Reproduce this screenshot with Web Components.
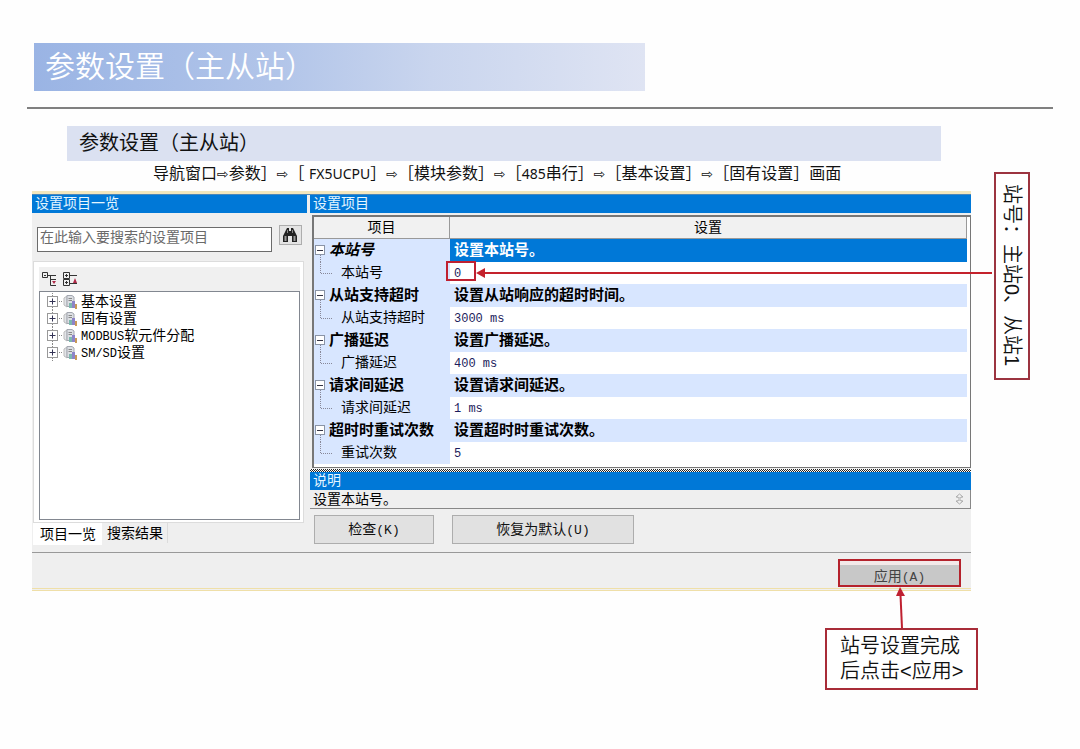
<!DOCTYPE html>
<html lang="zh-CN">
<head>
<meta charset="utf-8">
<title>参数设置（主从站）</title>
<style>
  body {
    margin: 0;
    background: #fefefe;
    color: #111;
    font-family: "Liberation Sans", "Noto Sans CJK SC", sans-serif;
  }
</style>
</head>
<body>
<slide-page>
  <slide-title slot="title">参数设置（主从站）</slide-title>
  <slide-subtitle slot="title">参数设置（主从站）</slide-subtitle>
  <nav-path slot="title"></nav-path>
  <settings-window></settings-window>
  <side-note slot="notes">站号：主站0、从站1</side-note>
  <apply-note slot="notes">站号设置完成<br>后点击&lt;应用&gt;</apply-note>
</slide-page>

<script>
class SlidePage extends HTMLElement {
  constructor() {
    super();
    this.attachShadow({ mode: 'open' });
    this.shadowRoot.innerHTML = `
      <style>
        :host {
          display: block;
          box-sizing: border-box;
          min-height: 100vh;
          padding-top: 43px;
          overflow: hidden;
          position: relative;
        }
        .stage {
          position: relative;
          padding: 0 109px 0 32px;
        }
      </style>
      <slot name="title"></slot>
      <div class="stage">
        <slot></slot>
        <slot name="notes"></slot>
      </div>
    `;
  }
}
customElements.define('slide-page', SlidePage);

class SlideTitle extends HTMLElement {
  constructor() {
    super();
    this.attachShadow({ mode: 'open' });
    this.shadowRoot.innerHTML = `
      <style>
        :host {
          display: block;
          margin: 0 27px;
          padding: 0 0 16px 7px;
          border-bottom: 2px solid #808080;
        }
        h1 {
          margin: 0;
          box-sizing: border-box;
          width: 60%;
          padding-left: 11px;
          color: #fff;
          font-size: 30px;
          font-weight: 350;
          line-height: 48px;
          background: linear-gradient(90deg, #9ab4e4, #b2c5e9 40%, #c9d5ee 65%, #dfe4f3);
        }
      </style>
      <h1><slot></slot></h1>
    `;
  }
}
customElements.define('slide-title', SlideTitle);

class SlideSubtitle extends HTMLElement {
  constructor() {
    super();
    this.attachShadow({ mode: 'open' });
    this.shadowRoot.innerHTML = `
      <style>
        :host {
          display: block;
          margin: 17px 139px 0 67px;
          background: #dbe1f1;
        }
        h2 {
          margin: 0;
          padding-left: 12px;
          font-size: 20px;
          font-weight: 400;
          line-height: 35px;
        }
      </style>
      <h2><slot></slot></h2>
    `;
  }
}
customElements.define('slide-subtitle', SlideSubtitle);

class NavPath extends HTMLElement {
  constructor() {
    super();
    this.attachShadow({ mode: 'open' });
    this.shadowRoot.innerHTML = `
      <style>
        :host {
          display: block;
          padding-left: 153px;
          font-size: 16px;
          line-height: 26px;
          height: 30px;
          white-space: nowrap;
        }
        i {
          font: 14px "DejaVu Sans", sans-serif;
        }
        b {
          font: 14px "Noto Sans", sans-serif;
        }
      </style>
      导航窗口<i>⇨</i>参数］<i>⇨</i>［ <b>FX5UCPU</b>］<i>⇨</i>［模块参数］<i>⇨</i>［<b>485</b>串行］<i>⇨</i>［基本设置］<i>⇨</i>［固有设置］画面
    `;
  }
}
customElements.define('nav-path', NavPath);

class TitleBar extends HTMLElement {
  constructor() {
    super();
    this.attachShadow({ mode: 'open' });
    this.shadowRoot.innerHTML = `
      <style>
        :host {
          display: block;
          height: 18px;
          padding-left: 3px;
          background: #0078d7;
          color: #e4f6ff;
          font-size: 14px;
          line-height: 16px;
        }
      </style>
      <slot></slot>
    `;
  }
}
customElements.define('title-bar', TitleBar);

class TreeItem extends HTMLElement {
  constructor() {
    super();
    this.attachShadow({ mode: 'open' });
    this.shadowRoot.innerHTML = `
      <style>
        :host {
          display: flex;
          align-items: center;
          gap: 3px;
          height: 17px;
          font-size: 14px;
          line-height: 17px;
          color: #000;
          white-space: nowrap;
        }
      </style>
      <svg width="32" height="17" viewBox="0 0 32 17" fill="none">
        <path d="M6.500 0V3M6.500 14V17M13 8.500H17" stroke="#888" stroke-dasharray="1 1"/>
        <rect x="1.500" y="3.500" width="10" height="10" fill="#fff" stroke="#999"/>
        <path d="M3.500 8.500H9.500M6.500 5.500V11.500" stroke="#335"/>
        <path d="M18 5L21 3V14L18 12Z" fill="#e2e4e8" stroke="#bbb"/>
        <path d="M21 2.500H26L28 4V13.500H21Z" fill="#dcdfe4" stroke="#a3a7b0"/>
        <path d="M22.500 5.500H26M22.500 7.500H26" stroke="#888"/>
        <path d="M23 10H26V15H23Z" fill="#7db8ae"/>
        <path d="M26 8H29V15H26Z" fill="#8d84c8"/>
        <path d="M29 11H31V16H29Z" fill="#c99a58"/>
      </svg>
      <span><slot></slot></span>
    `;
  }
}
customElements.define('tree-item', TreeItem);

class ItemPanel extends HTMLElement {
  constructor() {
    super();
    this.attachShadow({ mode: 'open' });
    this.shadowRoot.innerHTML = `
      <style>
        :host {
          display: flex;
          flex-direction: column;
          width: 275px;
          color: #000;
          font-size: 14px;
        }
        .search {
          display: flex;
          gap: 7px;
          padding: 12px 5px 0;
        }
        input {
          box-sizing: border-box;
          flex: 1;
          min-width: 0;
          height: 25px;
          margin: 2px 0 0;
          padding: 0 2px 5px;
          border: 1px solid #6b6b6b;
          border-radius: 0;
          background: #fff;
          font: 14px "Liberation Sans", "Noto Sans CJK SC", sans-serif;
        }
        input::placeholder {
          color: #6a6a6a;
          opacity: 1;
        }
        .find {
          display: grid;
          place-items: center;
          width: 23px;
          height: 20px;
          padding: 0;
          border: 1px solid #adadad;
          background: #e4e4e4;
        }
        .box {
          flex: 1;
          display: flex;
          flex-direction: column;
          margin: 9px 3px 0 1px;
          padding: 5px 3px 2px 5px;
          border: 1px solid #dcdcdc;
          background: #fff;
        }
        .tools {
          display: flex;
          align-items: center;
          gap: 4px;
          height: 24px;
          padding-left: 3px;
          background: #f0f0f0;
        }
        .tools button {
          display: flex;
          padding: 0;
          border: 0;
          background: none;
        }
        .tree {
          flex: 1;
          padding: 1px 6px;
          border: 1px solid #828790;
        }
        .latin {
          font: 12px "Liberation Mono", monospace;
        }
        .tabs {
          display: flex;
          align-items: flex-start;
          height: 29px;
          padding-left: 1px;
        }
        .tabs button {
          box-sizing: border-box;
          padding: 0 6px 0 7px;
          border: 0;
          background: #fff;
          color: #000;
          font: 14px/22px "Liberation Sans", "Noto Sans CJK SC", sans-serif;
        }
        .tabs button + button {
          height: 20px;
          padding: 0 4px 0 5px;
          border-right: 1px solid #dcdcdc;
          background: none;
          line-height: 18px;
        }
      </style>
      <title-bar>设置项目一览</title-bar>
      <div class="search">
        <input type="text" placeholder="在此输入要搜索的设置项目" aria-label="在此输入要搜索的设置项目">
        <button class="find" aria-label="搜索">
          <svg width="17" height="16" viewBox="0 0 17 16">
            <path d="M4 3L5 1H7V4H9V1H11L12 3L15 9V15H10V9H6V15H1V9Z" fill="#222"/>
            <path d="M3.500 9V14M12.500 9V14" stroke="#999" stroke-width="2"/>
            <path d="M5.500 3V6M10.500 3V6" stroke="#888"/>
          </svg>
        </button>
      </div>
      <div class="box">
        <div class="tools">
          <button aria-label="折叠">
            <svg width="16" height="16" viewBox="0 0 16 16" fill="none">
              <path d="M.5 1.500H5.500V6.500H.5ZM2 4.500H4M6 4.500H14M8.500 5V14.500H14M9 8.500H14" stroke="#333"/>
              <path d="M10 10H14L12 13Z" fill="#b02a48"/>
            </svg>
          </button>
          <button aria-label="展开">
            <svg width="16" height="16" viewBox="0 0 16 16" fill="none">
              <path d="M1.500 1.500H7.500V7.500H1.500ZM1.500 8.500H7.500V14.500H1.500ZM3 4.500H6M4.500 3V6M3 11.500H6M4.500 10V13M8 4.500H15M8 12.500H15" stroke="#333"/>
              <path d="M11 12H15L13 7Z" fill="#b02a48"/>
            </svg>
          </button>
        </div>
        <div class="tree">
          <tree-item>基本设置</tree-item>
          <tree-item>固有设置</tree-item>
          <tree-item><span class="latin">MODBUS</span>软元件分配</tree-item>
          <tree-item><span class="latin">SM/SD</span>设置</tree-item>
        </div>
      </div>
      <div class="tabs"><button>项目一览</button><button>搜索结果</button></div>
    `;
  }
}
customElements.define('item-panel', ItemPanel);

const GROUPS = [
  ['本站号', '设置本站号。', '本站号', '0'],
  ['从站支持超时', '设置从站响应的超时时间。', '从站支持超时', '3000 ms'],
  ['广播延迟', '设置广播延迟。', '广播延迟', '400 ms'],
  ['请求间延迟', '设置请求间延迟。', '请求间延迟', '1 ms'],
  ['超时时重试次数', '设置超时时重试次数。', '重试次数', '5'],
];

class SettingsTable extends HTMLElement {
  constructor() {
    super();
    this.attachShadow({ mode: 'open' });
    this.shadowRoot.innerHTML = `
      <style>
        :host {
          display: block;
          margin: 2px 0 0 2px;
          padding: 0 3px 3px 0;
          border: 1px solid #777;
          border-width: 2px 1px 1px 2px;
          background: #fff;
        }
        table {
          width: 100%;
          border-collapse: separate;
          border-spacing: 0;
          table-layout: fixed;
          font-size: 14px;
          color: #000;
        }
        th, td {
          box-sizing: border-box;
          height: 22px;
          padding: 0;
          line-height: 20px;
          white-space: nowrap;
        }
        thead th {
          padding-bottom: 2px;
          border-right: 1px solid #999;
          border-bottom: 1px solid #999;
          background: #f1f1f1;
          font-weight: 400;
          line-height: 18px;
        }
        .name {
          width: 136px;
        }
        tbody th {
          text-align: left;
          background: #d8e6ff;
          font-weight: 400;
        }
        tbody div {
          display: flex;
          align-items: center;
          height: 22px;
        }
        td {
          padding-left: 4px;
        }
        tbody span {
          padding-bottom: 2px;
        }
        .group th, .group td {
          background: #d8e6ff;
          font-size: 15px;
          font-weight: 700;
        }
        .group td {
          padding-bottom: 2px;
        }
        .group th, .group td, .group div {
          height: 23px;
        }
        .group:first-child td {
          background: #0078d7;
          color: #fff;
        }
        .group:first-child span {
          font-style: italic;
        }
        .item td {
          padding-top: 2px;
          color: #1c1c5c;
          font: 12px/20px "Liberation Mono", monospace;
        }
        svg {
          flex: none;
        }
      </style>
      <table>
        <colgroup><col class="name"><col></colgroup>
        <thead><tr><th>项目</th><th>设置</th></tr></thead>
        <tbody>
          ${GROUPS.map(([group, hint, item, value]) => `
            <tr class="group">
              <th><div>
                <svg width="15" height="23" viewBox="0 0 15 23" fill="none">
                  <rect x="1.500" y="6.500" width="9" height="9" fill="#fff" stroke="#8a94a6"/>
                  <path d="M3 11.500H9" stroke="#334"/>
                  <path d="M6.500 16V23" stroke="#889" stroke-dasharray="1 1"/>
                </svg>
                <span>${group}</span>
              </div></th>
              <td>${hint}</td>
            </tr>
            <tr class="item">
              <th><div>
                <svg width="27" height="22" viewBox="0 0 27 22" fill="none">
                  <path d="M6.500 0V11.500H18" stroke="#889" stroke-dasharray="1 1"/>
                </svg>
                <span>${item}</span>
              </div></th>
              <td>${value}</td>
            </tr>`).join('')}
        </tbody>
      </table>
    `;
  }
}
customElements.define('settings-table', SettingsTable);

class PushButton extends HTMLElement {
  constructor() {
    super();
    this.attachShadow({ mode: 'open' });
    this.shadowRoot.innerHTML = `
      <style>
        :host {
          display: block;
        }
        button {
          box-sizing: border-box;
          width: 100%;
          height: 29px;
          padding: 0 0 4px;
          border: 1px solid #adadad;
          background: #e1e1e1;
          color: #111;
          font: 14px "Liberation Sans", "Noto Sans CJK SC", sans-serif;
        }
        :host([pressed]) button {
          display: block;
          height: 20px;
          padding: 0;
          border: 0;
          background: #c8c8c8;
          color: #444;
        }
        span {
          font: 13px "Liberation Mono", monospace;
        }
      </style>
      <button><slot></slot><span>(${this.getAttribute('key')})</span></button>
    `;
  }
}
customElements.define('push-button', PushButton);

class SettingsWindow extends HTMLElement {
  constructor() {
    super();
    this.attachShadow({ mode: 'open' });
    this.shadowRoot.innerHTML = `
      <style>
        :host {
          display: block;
          border-top: 3px solid #f2e6bd;
          border-bottom: 3px double #efdfa8;
          background: #efefef;
        }
        .panes {
          display: flex;
          gap: 3px;
          border-top: 1px solid #4c86b8;
          border-bottom: 1px solid #999;
        }
        .main {
          flex: 1;
          min-width: 0;
        }
        .hatch {
          height: 3px;
          margin-top: 1px;
          background: repeating-conic-gradient(#222 0 25%, #fff 0 50%) 0 0 / 2px 2px;
        }
        .help {
          display: flex;
          align-items: center;
          justify-content: space-between;
          height: 17px;
          padding: 0 6px 1px 3px;
          border: 1px solid #888;
          border-width: 0 1px 1px 0;
          color: #000;
          font-size: 14px;
          line-height: 16px;
        }
        .buttons {
          display: flex;
          gap: 18px;
          padding: 6px 4px 8px;
        }
        .check {
          width: 120px;
        }
        .reset {
          width: 182px;
        }
        .footer {
          display: flex;
          justify-content: flex-end;
          padding: 6px 10px 1px;
        }
        .apply {
          width: 119px;
          padding-top: 4px;
          border: 2px solid #b5222c;
          background: #f3e9e9;
        }
      </style>
      <div class="panes">
        <item-panel></item-panel>
        <div class="main">
          <title-bar>设置项目</title-bar>
          <settings-table></settings-table>
          <div class="hatch"></div>
          <title-bar>说明</title-bar>
          <div class="help">
            设置本站号。
            <svg width="9" height="12" viewBox="0 0 9 12" fill="none" stroke="#aaa">
              <path d="M1 4L4.500 1L8 4H6V5H3V4ZM1 8L4.500 11L8 8H6V7H3V8Z"/>
            </svg>
          </div>
          <div class="buttons">
            <push-button class="check" key="K">检查</push-button>
            <push-button class="reset" key="U">恢复为默认</push-button>
          </div>
        </div>
      </div>
      <div class="footer">
        <push-button class="apply" key="A" pressed>应用</push-button>
      </div>
    `;
  }
}
customElements.define('settings-window', SettingsWindow);

// Callout beside the window, with its arrow and the frame round the station number
class SideNote extends HTMLElement {
  constructor() {
    super();
    this.attachShadow({ mode: 'open' });
    this.shadowRoot.innerHTML = `
      <style>
        :host {
          position: absolute;
          top: -19px;
          left: 446px;
          right: 50px;
          display: flex;
          align-items: flex-start;
          pointer-events: none;
        }
        .frame {
          box-sizing: border-box;
          width: 30px;
          height: 20px;
          margin-top: 89px;
          border: 2px solid #bf2030;
        }
        .line {
          flex: 1;
          height: 2px;
          margin: 100px 2px 0 8px;
          background: #c4222c;
        }
        svg {
          margin: 96px -9px 0 0;
        }
        .note {
          box-sizing: border-box;
          width: 36px;
          padding: 10px 0 12px;
          border: 2px solid #9c3440;
          background: #fff;
          font-size: 20px;
          font-weight: 350;
          line-height: 32px;
          writing-mode: vertical-rl;
          text-orientation: sideways;
          white-space: nowrap;
        }
      </style>
      <div class="frame"></div>
      <svg width="9" height="10" viewBox="0 0 9 10"><path d="M0 5L9 0V10Z" fill="#c4222c"/></svg>
      <div class="line"></div>
      <div class="note"><slot></slot></div>
    `;
  }
}
customElements.define('side-note', SideNote);

class ApplyNote extends HTMLElement {
  constructor() {
    super();
    this.attachShadow({ mode: 'open' });
    this.shadowRoot.innerHTML = `
      <style>
        :host {
          position: absolute;
          top: 396px;
          right: 102px;
          display: flex;
          flex-direction: column;
          align-items: center;
        }
        .note {
          box-sizing: border-box;
          width: 153px;
          padding: 4px 0 4px 13px;
          border: 2px solid #a82c38;
          background: #fff;
          font-size: 20px;
          font-weight: 350;
          line-height: 25px;
          white-space: nowrap;
        }
      </style>
      <svg width="12" height="41" viewBox="0 0 12 41">
        <path d="M4.500 8L6 41" stroke="#bf2030" stroke-width="2"/>
        <path d="M4 0L9 9H0Z" fill="#bf2030"/>
      </svg>
      <div class="note"><slot></slot></div>
    `;
  }
}
customElements.define('apply-note', ApplyNote);
</script>
</body>
</html>
